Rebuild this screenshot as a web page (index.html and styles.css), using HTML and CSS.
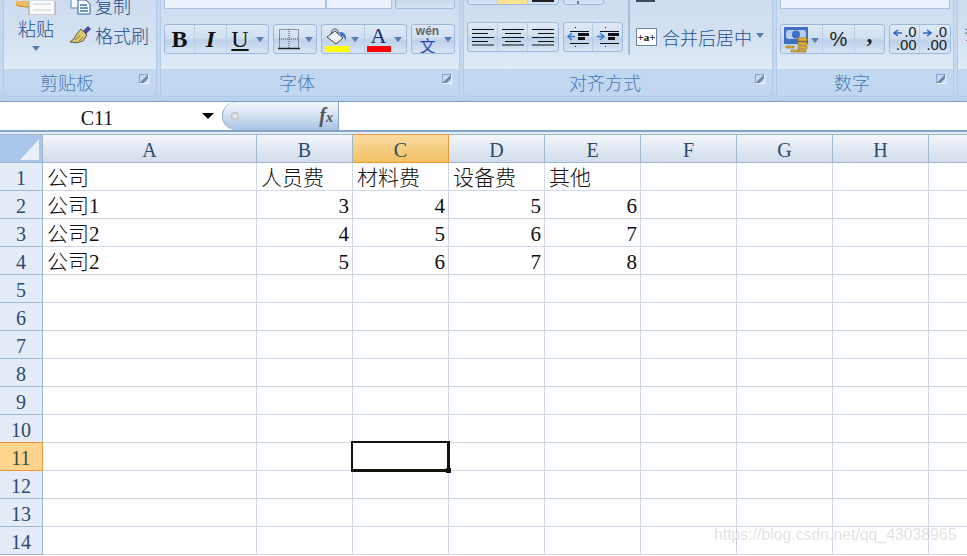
FILE: index.html
```html
<!DOCTYPE html>
<html lang="zh-CN">
<head>
<meta charset="utf-8">
<title>Excel</title>
<link rel="stylesheet" href="styles.css">
</head>
<body>
<div class="app">
  <div class="ribbon">
    <section class="group g-clip">
      <div class="body body-clip">
        <div class="paste">
          <svg class="paste-icon" width="42" height="14" viewBox="0 0 42 14"><path d="M0 0h14v6H3Q0 6 0 3z" fill="#eebd62"/><path d="M0 3q2 3 14 3" stroke="#b98a35" fill="none"/><rect x="13" y="-2" width="26" height="16" fill="#fbfbfb" stroke="#9a9da3"/><path d="M17 3h18M17 9h18" stroke="#c5cfdc"/></svg>
          <span class="paste-label">粘贴</span>
          <span class="caret"></span>
        </div>
        <div class="clip-col">
          <div class="clip-row">
            <svg width="21" height="20" viewBox="0 0 21 20"><rect x="1" y="1" width="11" height="12" fill="#f4f7fb" stroke="#6d85a6"/><path d="M8 5h8l4 4v10H8z" fill="#fff" stroke="#2f5f9c"/><path d="M10 10h7M10 13h8M10 16h8" stroke="#3c78bd" stroke-width="1.400"/></svg>
            <span>复制</span>
          </div>
          <div class="clip-row">
            <svg width="21" height="20" viewBox="0 0 21 20"><path d="M13 6l5-5 3 3-5 5z" fill="#4d4aa6"/><path d="M11 4l6 6-4 6q-6 3-13 1 5-3 6-7z" fill="#dcc66e" stroke="#5f5a3c"/><path d="M5 15l5-4M9 16l4-4" stroke="#8f7f3d"/></svg>
            <span>格式刷</span>
          </div>
        </div>
      </div>
      <div class="label">剪贴板<span class="expander"></span></div>
    </section>

    <section class="group g-font">
      <div class="body stacked">
        <div class="tools top-font">
          <div class="combo combo-name"></div>
          <div class="combo combo-size"></div>
          <div class="btn-set w-top"></div>
        </div>
        <div class="tools">
          <div class="btn-set">
            <span class="btn b-b">B</span>
            <span class="btn b-i">I</span>
            <span class="btn b-u"><u>U</u><span class="caret"></span></span>
          </div>
          <div class="btn-set">
            <span class="btn b-border">
              <svg width="22" height="22" viewBox="0 0 22 22"><path d="M1.500 1.500h19v19h-19zM11 1v19M1 11h20" fill="none" stroke="#444" stroke-dasharray="1 1"/><path d="M0 20.500h22" stroke="#222" stroke-width="1.400"/></svg>
              <span class="caret"></span>
            </span>
          </div>
          <div class="btn-set">
            <span class="btn b-fill">
              <span class="color-icon">
                <svg width="24" height="18" viewBox="0 0 24 18"><path d="M2 9l8-6 8 7-7 6z" fill="#eef1f6" stroke="#444"/><path d="M6 6q1-6 5-5 3 1 2 5" fill="none" stroke="#444"/><path d="M14 4q8-1 7 9-2-5-5-5z" fill="#3f74cc"/></svg>
                <span class="bar yellow"></span>
              </span>
              <span class="caret"></span>
            </span>
            <span class="btn b-color">
              <span class="color-icon">
                <span class="a-glyph">A</span>
                <span class="bar red"></span>
              </span>
              <span class="caret"></span>
            </span>
          </div>
          <div class="btn-set">
            <span class="btn b-wen">
              <span class="wen"><b>wén</b><em>文</em></span>
              <span class="caret"></span>
            </span>
          </div>
        </div>
        <span class="expander exp-body"></span>
      </div>
      <div class="label">字体</div>
    </section>

    <section class="group g-align">
      <div class="body body-align">
        <div class="align-main">
          <div class="tools top-align">
            <div class="btn-set w-three">
              <span class="btn t3"></span><span class="btn t3 on"></span><span class="btn t3"><i class="black"></i></span>
            </div>
            <div class="btn-set w-ori"><span class="tick"></span></div>
          </div>
          <div class="tools">
            <div class="btn-set">
              <span class="btn t3"><svg width="24" height="18" viewBox="0 0 24 18"><path d="M1 1.500h22M1 5.500h16M1 9.500h22M1 13.500h16M1 17h22" stroke="#111"/></svg></span>
              <span class="btn t3"><svg width="24" height="18" viewBox="0 0 24 18"><path d="M1 1.500h22M4 5.500h16M1 9.500h22M4 13.500h16M1 17h22" stroke="#111"/></svg></span>
              <span class="btn t3"><svg width="24" height="18" viewBox="0 0 24 18"><path d="M1 1.500h22M7 5.500h16M1 9.500h22M7 13.500h16M1 17h22" stroke="#111"/></svg></span>
            </div>
            <div class="btn-set">
              <span class="btn t2"><svg width="24" height="20" viewBox="0 0 24 20"><path d="M9 .500h1M4 4.500h19M4 16.500h19M9 19.500h1" stroke="#111"/><path d="M12 6h11v3H12zM12 10h7v3h-7z" fill="#111"/><path d="M9 9.500H3M6 6L2 9.500 6 13" stroke="#3a78d0" fill="none" stroke-width="1.500"/></svg></span>
              <span class="btn t2"><svg width="24" height="20" viewBox="0 0 24 20"><path d="M9 .500h1M4 4.500h19M4 16.500h19M9 19.500h1" stroke="#111"/><path d="M12 6h11v3H12zM12 10h7v3h-7z" fill="#111"/><path d="M1 9.500h6M4 6l4 3.500L4 13" stroke="#3a78d0" fill="none" stroke-width="1.500"/></svg></span>
            </div>
          </div>
        </div>
        <div class="sep"></div>
        <div class="merge-col">
          <div class="merge-top"></div>
          <div class="merge">
            <span class="merge-icon">+a+</span>
            <span>合并后居中</span>
            <span class="caret"></span>
          </div>
        </div>
      </div>
      <div class="label">对齐方式<span class="expander"></span></div>
    </section>

    <section class="group g-num">
      <div class="body stacked">
        <div class="tools top-font">
          <div class="combo combo-num"></div>
        </div>
        <div class="tools">
          <div class="btn-set">
            <span class="btn b-cur">
              <svg width="24" height="26" viewBox="0 0 24 26"><rect width="24" height="17" fill="#3f70c4"/><rect x="2" y="3" width="20" height="9" rx="3" fill="#b6cdee"/><circle cx="12" cy="7.500" r="4" fill="#3f70c4"/><path d="M14 11h9v3h-9zM14 15h9v3h-9zM14 19h9v3h-9zM14 23h8v2h-8z" fill="#e8b02c" stroke="#8d6a18" stroke-width=".6"/><path d="M2 19h8v2H2zM7 23h7v2H7z" fill="#e8b02c" stroke="#8d6a18" stroke-width=".6"/></svg>
              <span class="caret"></span>
            </span>
            <span class="btn b-pct">%</span>
            <span class="btn b-comma">,</span>
          </div>
          <div class="btn-set">
            <span class="btn b-dec"><svg class="dec-arrow" width="9" height="8" viewBox="0 0 9 8"><path d="M9 4H2M5 1L1 4l4 3" fill="none" stroke="#2f66c4" stroke-width="1.500"/></svg><span class="dec"><span>.0</span><span>.00</span></span></span>
            <span class="btn b-dec"><svg class="dec-arrow" width="9" height="8" viewBox="0 0 9 8"><path d="M0 4h7M4 1l4 3-4 3" fill="none" stroke="#2f66c4" stroke-width="1.500"/></svg><span class="dec"><span>.0</span><span>.00</span></span></span>
          </div>
        </div>
      </div>
      <div class="label">数字<span class="expander"></span></div>
    </section>

    <section class="group g-next">
      <div class="body body-next"><span>条件格式</span></div>
      <div class="label"></div>
    </section>
  </div>

  <div class="fbar">
    <div class="namebox"><span class="name">C11</span><span class="name-arrow"></span></div>
    <div class="pill"><span class="dot"></span><span class="fx">f<small>x</small></span></div>
    <div class="finput"></div>
  </div>

  <div class="sheet">
    <div class="row head">
      <div class="corner"><svg width="38" height="25" viewBox="0 0 38 25"><path d="M18 24L37 3v21z" fill="#e9f0f9"/></svg></div>
      <div class="ch a">A</div><div class="ch">B</div><div class="ch sel">C</div><div class="ch">D</div><div class="ch">E</div><div class="ch">F</div><div class="ch">G</div><div class="ch">H</div><div class="ch"></div>
    </div>
    <div class="row"><div class="rh">1</div><div class="c a">公司</div><div class="c">人员费</div><div class="c">材料费</div><div class="c">设备费</div><div class="c">其他</div><div class="c"></div><div class="c"></div><div class="c"></div><div class="c"></div></div>
    <div class="row"><div class="rh">2</div><div class="c a">公司1</div><div class="c n">3</div><div class="c n">4</div><div class="c n">5</div><div class="c n">6</div><div class="c"></div><div class="c"></div><div class="c"></div><div class="c"></div></div>
    <div class="row"><div class="rh">3</div><div class="c a">公司2</div><div class="c n">4</div><div class="c n">5</div><div class="c n">6</div><div class="c n">7</div><div class="c"></div><div class="c"></div><div class="c"></div><div class="c"></div></div>
    <div class="row"><div class="rh">4</div><div class="c a">公司2</div><div class="c n">5</div><div class="c n">6</div><div class="c n">7</div><div class="c n">8</div><div class="c"></div><div class="c"></div><div class="c"></div><div class="c"></div></div>
    <div class="row"><div class="rh">5</div><div class="c a"></div><div class="c"></div><div class="c"></div><div class="c"></div><div class="c"></div><div class="c"></div><div class="c"></div><div class="c"></div><div class="c"></div></div>
    <div class="row"><div class="rh">6</div><div class="c a"></div><div class="c"></div><div class="c"></div><div class="c"></div><div class="c"></div><div class="c"></div><div class="c"></div><div class="c"></div><div class="c"></div></div>
    <div class="row"><div class="rh">7</div><div class="c a"></div><div class="c"></div><div class="c"></div><div class="c"></div><div class="c"></div><div class="c"></div><div class="c"></div><div class="c"></div><div class="c"></div></div>
    <div class="row"><div class="rh">8</div><div class="c a"></div><div class="c"></div><div class="c"></div><div class="c"></div><div class="c"></div><div class="c"></div><div class="c"></div><div class="c"></div><div class="c"></div></div>
    <div class="row"><div class="rh">9</div><div class="c a"></div><div class="c"></div><div class="c"></div><div class="c"></div><div class="c"></div><div class="c"></div><div class="c"></div><div class="c"></div><div class="c"></div></div>
    <div class="row"><div class="rh">10</div><div class="c a"></div><div class="c"></div><div class="c"></div><div class="c"></div><div class="c"></div><div class="c"></div><div class="c"></div><div class="c"></div><div class="c"></div></div>
    <div class="row"><div class="rh sel">11</div><div class="c a"></div><div class="c"></div><div class="c active"></div><div class="c"></div><div class="c"></div><div class="c"></div><div class="c"></div><div class="c"></div><div class="c"></div></div>
    <div class="row"><div class="rh">12</div><div class="c a"></div><div class="c"></div><div class="c"></div><div class="c"></div><div class="c"></div><div class="c"></div><div class="c"></div><div class="c"></div><div class="c"></div></div>
    <div class="row"><div class="rh">13</div><div class="c a"></div><div class="c"></div><div class="c"></div><div class="c"></div><div class="c"></div><div class="c"></div><div class="c"></div><div class="c"></div><div class="c"></div></div>
    <div class="row"><div class="rh">14</div><div class="c a"></div><div class="c"></div><div class="c"></div><div class="c"></div><div class="c"></div><div class="c"></div><div class="c"></div><div class="c"></div><div class="c"></div></div>
    <div class="watermark">https://blog.csdn.net/qq_43038965</div>
  </div>
</div>
</body>
</html>
```
FILE: styles.css
```css
*, *::before, *::after { box-sizing: border-box; }
html, body { margin: 0; height: 100%; overflow: hidden; background: #fff; }
.app { width: 967px; height: 556px; overflow: hidden; display: flex; flex-direction: column; font-family: "Noto Sans CJK SC", "Liberation Sans", sans-serif; }

/* ribbon */
.ribbon { height: 101px; flex: none; display: flex; gap: 3px; padding: 0 0 4px 3px; background: linear-gradient(#c3d7ee, #c3d8ef 90%, #b6d2ec); overflow: hidden; }
.group { flex: none; display: flex; flex-direction: column; border: 1px solid #b3cbe6; border-top: 0; border-radius: 0 0 4px 4px; overflow: hidden; }
.g-clip { width: 154px; }
.g-font { width: 300px; }
.g-align { width: 310px; }
.g-num { width: 178px; }
.g-next { width: 40px; }
.body { height: 69px; flex: none; position: relative; overflow: hidden; background: linear-gradient(#cddcef, #d4e2f2 60%, #e0ebf8); }
.stacked { display: flex; flex-direction: column; justify-content: flex-end; gap: 15px; padding: 0 3px 15px; }
.label { height: 26px; flex: none; position: relative; padding-right: 26px; background: #c2d8f0; color: #4a78b8; font-size: 18px; line-height: 26px; text-align: center; font-weight: 300; }
.expander { position: absolute; right: 7px; top: 5px; width: 10px; height: 10px; border: 1px solid #8aa6c9; border-right-color: #f2f6fb; border-bottom-color: #f2f6fb; background: linear-gradient(135deg, transparent 50%, #6a88b0 50%, #6a88b0 72%, transparent 72%); }
.exp-body { top: 74px; }
.g-font .label { overflow: visible; }
.g-font .body { overflow: visible; }
.g-font .exp-body { z-index: 1; }

.caret { display: inline-block; width: 0; height: 0; border: 4px solid transparent; border-top: 5px solid #587caf; border-bottom: 0; flex: none; }

/* clipboard */
.body-clip { display: flex; align-items: flex-end; padding: 0 0 18px 1px; }
.paste { width: 62px; display: flex; flex-direction: column; align-items: center; flex: none; }
.paste-icon { display: block; margin-left: 1px; }
.paste-label { color: #1f4f8f; font-size: 18px; line-height: 26px; font-weight: 300; }
.paste .caret { margin-top: 5px; }
.clip-col { display: flex; flex-direction: column; margin-left: 3px; margin-bottom: 1px; }
.clip-row { height: 30px; display: flex; align-items: center; gap: 4px; color: #1f4f8f; font-size: 18px; font-weight: 300; white-space: nowrap; }

/* shared buttons */
.tools { display: flex; gap: 4px; flex: none; }
.btn-set { display: flex; height: 30px; border: 1px solid #9db8da; border-radius: 3px; background: linear-gradient(#dfe9f7, #d1dff1 45%, #bdd1ea 55%, #d7e4f4); flex: none; overflow: hidden; }
.btn { display: flex; align-items: center; justify-content: center; height: 100%; border-right: 1px solid #b9cde6; flex: none; }
.btn:last-child { border-right: 0; }
.combo { height: 30px; border: 1px solid #aac2de; background: #eaf1fa; flex: none; }
.combo-name { width: 162px; }
.combo-size { width: 66px; margin-left: -4px; }
.w-top { width: 60px; margin-left: -1px; }
.combo-num { width: 170px; }

/* font */
.b-b { width: 30px; font: 700 24px "Liberation Serif", serif; color: #111; }
.b-i { width: 32px; font: italic 700 24px "Liberation Serif", serif; color: #111; }
.b-u { width: 41px; gap: 7px; font: 24px "Liberation Serif", serif; color: #111; }
.b-border { width: 42px; gap: 5px; }
.b-fill { width: 43px; gap: 2px; padding-right: 3px; }
.b-color { width: 41px; gap: 3px; padding-right: 3px; }
.b-wen { width: 42px; gap: 3px; }
.color-icon { width: 25px; height: 26px; display: flex; flex-direction: column; align-items: center; justify-content: flex-end; }
.bar { display: block; width: 24px; height: 6px; flex: none; }
.yellow { background: #ff0; }
.red { background: #f00; }
.a-glyph { font: 400 22px/20px "Liberation Serif", serif; color: #14306b; }
.wen { display: flex; flex-direction: column; align-items: center; width: 27px; line-height: 1; }
.wen b { font: 700 12px/12px "Liberation Sans", sans-serif; color: #666; }
.wen em { font: normal 16px/16px "Noto Sans CJK SC", sans-serif; color: #2247b8; }

/* alignment */
.body-align { display: flex; padding: 0 0 0 3px; }
.align-main { display: flex; flex-direction: column; justify-content: flex-end; gap: 17px; padding-bottom: 17px; height: 69px; flex: none; width: 157px; }
.top-align .btn-set { height: 30px; align-items: flex-end; }
.w-three { width: 92px; }
.w-ori { width: 41px; position: relative; }
.tick { position: absolute; left: 13px; bottom: 0; width: 2px; height: 3px; background: #777; }
.t3 { width: 30px; }
.t2 { width: 29px; }
.on { background: #fbe390; }
.black { display: block; width: 22px; height: 3px; background: #222; align-self: flex-end; margin-bottom: 2px; }
.sep { width: 2px; height: 55px; background: #a3bedd; margin-left: 4px; flex: none; }
.merge-col { display: flex; flex-direction: column; margin-left: 6px; }
.merge-top { width: 19px; height: 2px; background: #3d4a5c; }
.merge { display: flex; align-items: center; margin-top: 24px; height: 22px; color: #1f4f8f; font-size: 18px; font-weight: 300; white-space: nowrap; }
.merge-icon { width: 21px; height: 18px; border: 1px solid #6f87a6; background: #fff; font: 700 11px/16px "Liberation Serif", serif; color: #111; text-align: center; margin-right: 5px; }
.merge .caret { margin-left: 4px; margin-top: -4px; }

/* number */
.b-cur { width: 42px; gap: 3px; padding-top: 2px; }
.b-pct { width: 32px; font: 20px "Liberation Sans", sans-serif; color: #222; }
.b-comma { width: 29px; padding-bottom: 10px; font: 700 24px/18px "Liberation Serif", serif; color: #222; }
.b-dec { width: 30px; position: relative; }
.dec { display: flex; flex-direction: column; align-items: flex-end; width: 24px; font: 14px/13px "DejaVu Sans", sans-serif; color: #222; letter-spacing: -.5px; }
.dec-arrow { position: absolute; left: 3px; top: 4px; }
.g-next .label { background: #c2d8f0; }
.body-next { padding: 19px 0 0 6px; color: #1f4f8f; font-size: 18px; font-weight: 300; white-space: nowrap; }

/* formula bar */
.fbar { height: 31px; flex: none; display: flex; background: #fff; border-top: 1px solid #7d9fc4; border-bottom: 2px solid #84a4c8; }
.namebox { width: 222px; flex: none; display: flex; align-items: center; }
.name { width: 194px; padding-top: 4px; text-align: center; font: 20px "Liberation Serif", serif; color: #111; }
.name-arrow { margin-left: 8px; width: 0; height: 0; border: 6px solid transparent; border-top: 6px solid #000; border-bottom: 0; }
.pill { width: 117px; flex: none; display: flex; align-items: center; justify-content: space-between; padding: 0 5px 0 8px; background: linear-gradient(#f3f7fc, #dfe8f5 35%, #a8c2e3); border: 1px solid #89a9cd; border-width: 0 1px 0 1px; border-radius: 15px 0 0 15px; }
.dot { width: 8px; height: 8px; border-radius: 50%; background: radial-gradient(#f5f5f5, #a9a9a9); }
.fx { font: italic 700 20px/20px "Liberation Serif", serif; color: #555; }
.fx small { font-size: 14px; }
.finput { flex: 1; }

/* sheet */
.sheet { flex: 1; position: relative; padding-top: 2px; background: linear-gradient(#e3edf8 2px, #fff 2px); overflow: hidden; font-family: "Liberation Serif", "Noto Sans CJK SC", serif; font-size: 21px; font-weight: 300; color: #111; }
.row { display: flex; height: 28px; }
.head { height: 29px; }
.corner { width: 43px; flex: none; display: flex; align-items: center; justify-content: center; background: #a9c5ea; border: 1px solid #9eb6ce; border-left: 0; }
.ch, .c { width: 96px; flex: none; }
.a { width: 214px; }
.ch { display: flex; align-items: center; justify-content: center; padding-top: 3px; background: linear-gradient(#f4f7fb, #e2e9f3 45%, #d3deeb); border: 0 solid #9eb6ce; border-width: 1px 1px 1px 0; font-size: 20px; color: #2d4a6e; }
.ch.sel { background: linear-gradient(#f9dca3, #f2c063); border-color: #f29536; color: #2f4a60; }
.rh { width: 43px; flex: none; padding-top: 4px; background: #e4ecf7; border: 0 solid #9eb6ce; border-width: 0 1px 1px 0; display: flex; align-items: center; justify-content: center; font-size: 20px; color: #2d4a6e; }
.rh.sel { background: #ffd58d; border-color: #f29536; color: #3d4a45; border-top: 1px solid #f29536; margin-top: -1px; height: 29px; }
.c { border: 0 solid #d0d9e8; border-width: 0 1px 1px 0; padding: 2px 3px 0 4px; line-height: 27px; white-space: nowrap; position: relative; }
.n { text-align: right; }
.active::before { content: ""; position: absolute; left: -2px; top: -2px; width: 99px; height: 31px; border: solid #16130f; border-width: 2px 3px 3px 2px; z-index: 2; }
.active::after { content: ""; position: absolute; left: 93px; top: 25px; width: 5px; height: 5px; background: #16130f; z-index: 3; }
.watermark { position: absolute; left: 714px; top: 394px; font: 15.800px "Liberation Sans", sans-serif; color: rgba(120, 120, 120, .22); filter: blur(.5px); white-space: nowrap; }
```
